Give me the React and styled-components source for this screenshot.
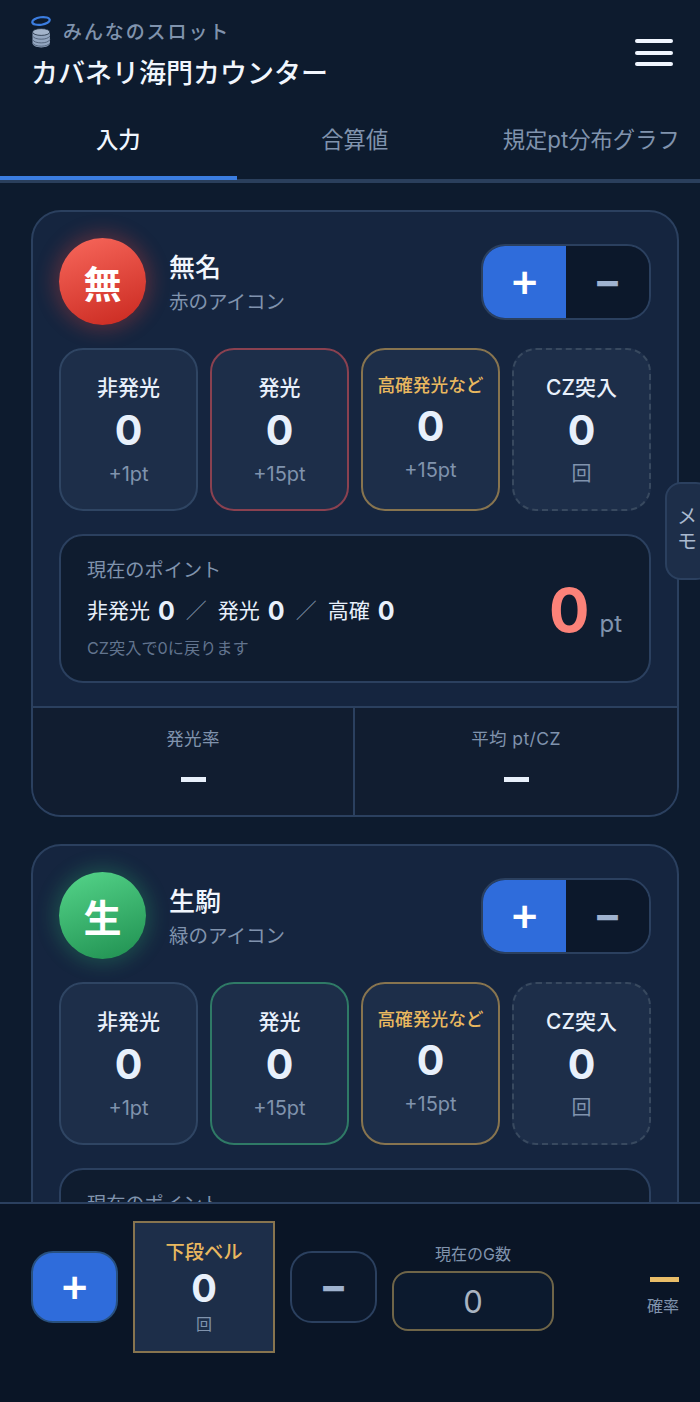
import React from "react";
import styled, { createGlobalStyle } from "styled-components";

const GlobalStyle = createGlobalStyle`
  html, body {
    margin: 0;
    height: 100%;
    overflow: hidden;
    background: #0d1b2e;
  }
  * { box-sizing: border-box; }
  body {
    font-family: Inter, "Noto Sans CJK JP", sans-serif;
    color: #e8f0fb;
  }
`;

const players = [
  { id: 1, mark: "無", name: "無名", note: "赤のアイコン", tone: "red" },
  { id: 2, mark: "生", name: "生駒", note: "緑のアイコン", tone: "green" },
];

const tones = {
  red: {
    fill: "linear-gradient(160deg, #f8685c, #c9281f)",
    glow: "rgba(239, 68, 58, 0.26)",
    border: "#8a4150",
  },
  green: {
    fill: "linear-gradient(160deg, #55d58a, #1f8f50)",
    glow: "rgba(52, 199, 120, 0.22)",
    border: "#2f7a66",
  },
};

const CoinLogo = () => (
  <svg width="22" height="34" viewBox="0 0 22 34">
    <ellipse cx="10" cy="7" rx="8.800" ry="3.800" fill="none" stroke="#3b7de0" strokeWidth="2.200" transform="rotate(-8 10 7)" />
    <path d="M1.500 18v11c0 2.600 3.800 4.400 8.700 4.400s8.700-1.800 8.700-4.400V18z" fill="#93a6c0" />
    <ellipse cx="10.200" cy="18" rx="8.700" ry="3.400" fill="#a3b4cb" stroke="#0d1b2e" strokeWidth="0.700" />
    <path d="M1.500 22c1 2 4.500 3.200 8.700 3.200s7.700-1.200 8.700-3.200M1.500 25.700c1 2 4.500 3.200 8.700 3.200s7.700-1.200 8.700-3.200M1.500 29c1 2 4.500 3.200 8.700 3.200s7.700-1.200 8.700-3.200" fill="none" stroke="#55667e" strokeWidth="1" />
  </svg>
);

const StatBox = ({ label, value, sub, kind, tone }) => (
  <Stat $kind={kind} $tone={tone}>
    <StatLabel $kind={kind}>{label}</StatLabel>
    <StatValue>{value}</StatValue>
    <StatSub>{sub}</StatSub>
  </Stat>
);

const PlayerCard = ({ player }) => (
  <Card>
    <CardBody>
      <CardHead>
        <Avatar $tone={player.tone}>{player.mark}</Avatar>
        <NameBlock>
          <Name>{player.name}</Name>
          <Note>{player.note}</Note>
        </NameBlock>
        <Stepper>
          <StepPlus>+</StepPlus>
          <StepMinus>−</StepMinus>
        </Stepper>
      </CardHead>
      <StatGrid>
        <StatBox label="非発光" value="0" sub="+1pt" />
        <StatBox label="発光" value="0" sub="+15pt" kind="tone" tone={player.tone} />
        <StatBox label="高確発光など" value="0" sub="+15pt" kind="gold" />
        <StatBox label="CZ突入" value="0" sub="回" kind="dashed" />
      </StatGrid>
      <PointBox>
        <PointInfo>
          <PointTitle>現在のポイント</PointTitle>
          <PointLine>
            非発光<b>0</b><Slash>／</Slash>発光<b>0</b><Slash>／</Slash>高確<b>0</b>
          </PointLine>
          <PointHint>CZ突入で0に戻ります</PointHint>
        </PointInfo>
        <PointTotal>
          <PointNumber>0</PointNumber>
          <PointUnit>pt</PointUnit>
        </PointTotal>
      </PointBox>
    </CardBody>
    <CardFoot>
      <FootCell>
        <FootLabel>発光率</FootLabel>
        <FootValue />
      </FootCell>
      <FootCell>
        <FootLabel>平均 pt/CZ</FootLabel>
        <FootValue />
      </FootCell>
    </CardFoot>
  </Card>
);

const App = () => (
  <Page>
    <GlobalStyle />
    <Header>
      <div>
        <Brand>
          <CoinLogo />
          <BrandName>みんなのスロット</BrandName>
        </Brand>
        <Title>カバネリ海門カウンター</Title>
      </div>
      <Burger aria-label="menu">
        <i /><i /><i />
      </Burger>
    </Header>
    <Tabs>
      <Tab $active>入力</Tab>
      <Tab>合算値</Tab>
      <Tab>規定pt分布グラフ</Tab>
    </Tabs>
    <Main>
      {players.map((p) => (
        <PlayerCard key={p.id} player={p} />
      ))}
    </Main>
    <MemoTab>メモ</MemoTab>
    <BottomBar>
      <BarPlus>+</BarPlus>
      <BellBox>
        <BellLabel>下段ベル</BellLabel>
        <BellValue>0</BellValue>
        <BellUnit>回</BellUnit>
      </BellBox>
      <BarMinus>−</BarMinus>
      <GameField>
        <GameLabel>現在のG数</GameLabel>
        <GameInput>0</GameInput>
      </GameField>
      <Rate>
        <RateMark />
        <RateLabel>確率</RateLabel>
      </Rate>
    </BottomBar>
  </Page>
);

export default App;

const Page = styled.div`
  position: relative;
  width: 700px;
  height: 1402px;
  overflow: hidden;
  background: #0d1b2e;
`;

const Header = styled.header`
  height: 112px;
  padding: 14px 31px 0;
  display: flex;
  justify-content: space-between;
`;

const Brand = styled.div`
  display: flex;
  align-items: center;
  gap: 10px;
  height: 34px;
`;

const BrandName = styled.span`
  font-size: 19px;
  line-height: 32px;
  font-weight: 500;
  letter-spacing: 1.9px;
  color: #8093ad;
  margin-top: 4px;
`;

const Title = styled.h1`
  margin: 7px 0 0;
  font-size: 27px;
  line-height: 38px;
  font-weight: 500;
  color: #f1f6fd;
`;

const Burger = styled.button`
  margin: 25px -4px 0 0;
  padding: 0;
  width: 38px;
  height: 27px;
  border: 0;
  background: none;
  display: flex;
  flex-direction: column;
  justify-content: space-between;
  & > i {
    display: block;
    height: 4px;
    border-radius: 2px;
    background: #f0f6ff;
  }
`;

const Tabs = styled.nav`
  display: flex;
  height: 71px;
  border-bottom: 4px solid #2a3f5c;
`;

const Tab = styled.div`
  flex: 0 0 236.5px;
  height: 68px;
  padding-top: 12px;
  text-align: center;
  font-size: 22.300px;
  line-height: 32px;
  white-space: nowrap;
  font-weight: ${(p) => (p.$active ? 500 : 400)};
  color: ${(p) => (p.$active ? "#f1f6fd" : "#8093ad")};
  border-bottom: ${(p) => (p.$active ? "4px solid #3b7de0" : "0")};
`;

const Main = styled.main`
  padding: 27px 21px 0 31px;
  display: flex;
  flex-direction: column;
  gap: 27px;
`;

const Card = styled.section`
  width: 648px;
  border: 2px solid #2b405f;
  border-radius: 30px;
  background: #15253f;
  overflow: hidden;
`;

const CardBody = styled.div`
  padding: 26px 26px 23px;
`;

const CardHead = styled.div`
  display: flex;
  align-items: center;
  height: 87px;
`;

const Avatar = styled.div`
  width: 87px;
  height: 87px;
  flex: none;
  border-radius: 50%;
  display: flex;
  align-items: center;
  justify-content: center;
  font-size: 38px;
  font-weight: 700;
  color: #fff;
  background: ${(p) => tones[p.$tone].fill};
  box-shadow: 0 0 18px 6px ${(p) => tones[p.$tone].glow};
`;

const NameBlock = styled.div`
  margin: 4px 0 0 23px;
  flex: 1;
`;

const Name = styled.div`
  font-size: 26px;
  line-height: 34px;
  font-weight: 500;
  color: #f1f6fd;
`;

const Note = styled.div`
  font-size: 19.500px;
  line-height: 28px;
  margin-top: 3px;
  color: #8093ad;
`;

const Stepper = styled.div`
  width: 170px;
  height: 76px;
  display: flex;
  border: 2px solid #2b405f;
  border-radius: 24px;
  overflow: hidden;
`;

const StepPlus = styled.button`
  flex: 1;
  border: 0;
  padding: 0 0 6px;
  background: #2f6cdb;
  color: #fff;
  font: 500 46px/1 Inter, sans-serif;
`;

const StepMinus = styled.button`
  flex: 1;
  border: 0;
  padding: 0 0 2px;
  background: #0c182b;
  color: #9fb2cf;
  font: 700 42px/1 Inter, sans-serif;
`;

const StatGrid = styled.div`
  margin-top: 23px;
  display: grid;
  grid-template-columns: repeat(4, 139px);
  gap: 12px;
`;

const statBorder = (p) => {
  if (p.$kind === "tone") return `2px solid ${tones[p.$tone].border}`;
  if (p.$kind === "gold") return "2px solid #87744f";
  if (p.$kind === "dashed") return "2px dashed #38495f";
  return "2px solid #2f4563";
};

const Stat = styled.div`
  height: 163px;
  padding-top: 24px;
  border: ${statBorder};
  border-radius: 24px;
  background: #1d2e49;
  display: flex;
  flex-direction: column;
  align-items: center;
`;

const StatLabel = styled.div`
  font-size: ${(p) => (p.$kind === "gold" ? "17.700px" : "21px")};
  line-height: ${(p) => (p.$kind === "gold" ? "24px" : "28px")};
  font-weight: 500;
  white-space: nowrap;
  color: ${(p) => (p.$kind === "gold" ? "#e9b85f" : "#e8f0fb")};
`;

const StatValue = styled.div`
  font-size: 41px;
  line-height: 57px;
  font-weight: 700;
  color: #e8f0fb;
`;

const StatSub = styled.div`
  margin-top: 2px;
  font-size: 20px;
  line-height: 26px;
  color: #8093ad;
`;

const PointBox = styled.div`
  margin-top: 23px;
  height: 149px;
  padding: 20px 27px 0 26px;
  border: 2px solid #2b405f;
  border-radius: 24px;
  background: #0f1c2f;
  display: flex;
  justify-content: space-between;
`;

const PointInfo = styled.div`
  display: flex;
  flex-direction: column;
`;

const PointTitle = styled.div`
  font-size: 19.200px;
  line-height: 28px;
  color: #8093ad;
`;

const PointLine = styled.div`
  margin-top: 11px;
  font-size: 21px;
  line-height: 32px;
  color: #e8f0fb;
  white-space: nowrap;
  display: flex;
  align-items: center;
  & > b {
    margin-left: 8px;
    font-size: 25px;
    font-weight: 700;
  }
`;

const Slash = styled.span`
  margin: 0 11px;
  color: #8093ad;
`;

const PointHint = styled.div`
  margin-top: 9px;
  font-size: 16.200px;
  line-height: 24px;
  color: #62748e;
`;

const PointTotal = styled.div`
  display: flex;
  align-items: baseline;
  margin-top: 12px;
`;

const PointNumber = styled.span`
  font-size: 60px;
  line-height: 84px;
  font-weight: 700;
  color: #fb8279;
`;

const PointUnit = styled.span`
  margin-left: 10px;
  font-size: 24px;
  color: #8093ad;
`;

const CardFoot = styled.div`
  display: grid;
  grid-template-columns: 320px 1fr;
  height: 109px;
  border-top: 2px solid #2b405f;
  background: #111d30;
`;

const FootCell = styled.div`
  padding-top: 18px;
  text-align: center;
  & + & {
    border-left: 2px solid #2b405f;
  }
`;

const FootLabel = styled.div`
  font-size: 17.500px;
  line-height: 26px;
  letter-spacing: 0.4px;
  color: #8093ad;
`;

const FootValue = styled.div`
  width: 25px;
  height: 5px;
  margin: 25px auto 0;
  background: #e8f0fb;
`;

const MemoTab = styled.div`
  position: absolute;
  top: 482px;
  right: -12px;
  width: 47px;
  height: 98px;
  padding: 21px 0 0 10px;
  border: 2px solid #2b405f;
  border-radius: 16px;
  background: #1d2e49;
  color: #a9b9cf;
  font-size: 20px;
  line-height: 25px;
`;

const BottomBar = styled.footer`
  position: absolute;
  left: 0;
  right: 0;
  bottom: 0;
  height: 200px;
  padding: 17px 21px 0 31px;
  border-top: 2px solid #2b405f;
  background: #0a1526;
  display: flex;
  align-items: flex-start;
`;

const BarPlus = styled.button`
  width: 87px;
  height: 72px;
  margin-top: 30px;
  padding: 0 0 6px;
  border: 2px solid #28507f;
  border-radius: 22px;
  background: #2f6cdb;
  color: #fff;
  font: 500 46px/1 Inter, sans-serif;
`;

const BellBox = styled.div`
  width: 142px;
  height: 132px;
  margin-left: 15px;
  padding-top: 16px;
  border: 2px solid #87744f;
  background: #1d2e49;
  display: flex;
  flex-direction: column;
  align-items: center;
`;

const BellLabel = styled.div`
  font-size: 19.300px;
  line-height: 27px;
  font-weight: 500;
  color: #e9b85f;
`;

const BellValue = styled.div`
  font-size: 38px;
  line-height: 45px;
  font-weight: 700;
  color: #e8f0fb;
`;

const BellUnit = styled.div`
  margin-top: 1px;
  font-size: 16px;
  line-height: 24px;
  color: #8093ad;
`;

const BarMinus = styled.button`
  width: 87px;
  height: 72px;
  margin: 30px 0 0 15px;
  padding: 0 0 2px;
  border: 2px solid #2b405f;
  border-radius: 22px;
  background: #0c182b;
  color: #9fb2cf;
  font: 700 42px/1 Inter, sans-serif;
`;

const GameField = styled.div`
  width: 162px;
  margin: 21px 0 0 15px;
  text-align: center;
`;

const GameLabel = styled.div`
  font-size: 16px;
  line-height: 24px;
  color: #8093ad;
`;

const GameInput = styled.div`
  height: 60px;
  margin-top: 5px;
  border: 2px solid #6f6548;
  border-radius: 16px;
  background: #0c1a2e;
  color: #a9b4c2;
  font-size: 31px;
  line-height: 57px;
`;

const Rate = styled.div`
  margin: 56px 0 0 auto;
  display: flex;
  flex-direction: column;
  align-items: flex-end;
`;

const RateMark = styled.div`
  width: 29px;
  height: 5px;
  background: #e9bd68;
`;

const RateLabel = styled.div`
  margin-top: 12px;
  font-size: 16px;
  line-height: 24px;
  color: #8093ad;
`;
